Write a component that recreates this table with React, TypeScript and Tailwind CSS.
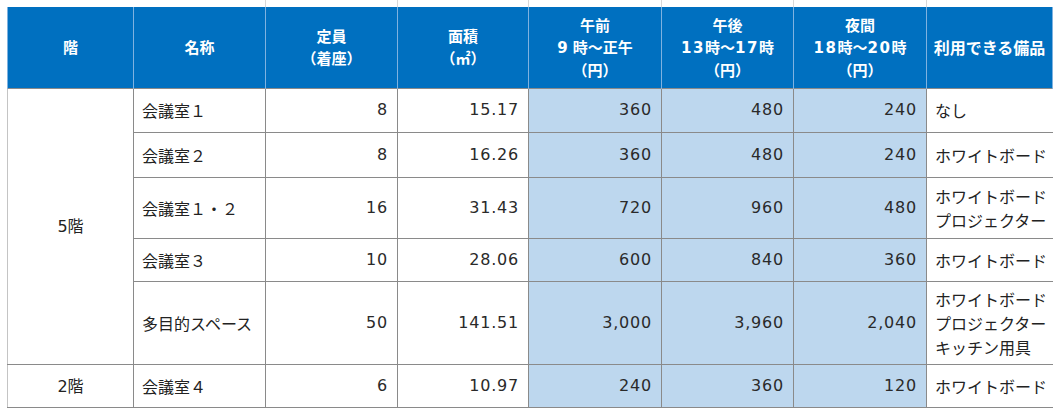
const rows = [
  { name: "会議室１", cap: "8", area: "15.17", am: "360", pm: "480", ev: "240", eq: ["なし"], h: "h-[44px]" },
  { name: "会議室２", cap: "8", area: "16.26", am: "360", pm: "480", ev: "240", eq: ["ホワイトボード"], h: "h-[45px]" },
  { name: "会議室１・２", cap: "16", area: "31.43", am: "720", pm: "960", ev: "480", eq: ["ホワイトボード", "プロジェクター"], h: "h-[61px]" },
  { name: "会議室３", cap: "10", area: "28.06", am: "600", pm: "840", ev: "360", eq: ["ホワイトボード"], h: "h-[43px]" },
  { name: "多目的スペース", cap: "50", area: "141.51", am: "3,000", pm: "3,960", ev: "2,040", eq: ["ホワイトボード", "プロジェクター", "キッチン用具"], h: "h-[83px]" },
];

const td = "border border-[#8a8a8a] px-[8px] py-0 align-middle";
const eqCell = "border border-[#8a8a8a] border-r-white pl-[8px] pr-0 py-0 align-middle whitespace-nowrap";
const num = `${td} text-right pr-[9px] text-[16px] text-[#2a2a2a] tracking-[0.8px] [font-family:'DejaVu_Sans',sans-serif]`;
const price = `${num} bg-[#bdd7ee]`;
const th = "border-x border-[#7fb2e0] bg-[#0070c0] px-1 text-center align-middle font-bold text-white leading-[22px]";
const dig = "[font-family:'DejaVu_Sans',sans-serif] tracking-[1.5px]";

export default function App() {
  return (
    <div className="h-[410px] w-[1057px] overflow-hidden bg-white pl-[7px] text-[16px] text-[#222] [font-family:'Noto_Sans_CJK_JP',sans-serif]">
      <table className="w-[1045px] table-fixed border-collapse">
        <colgroup>
          <col className="w-[126px]" />
          <col className="w-[132px]" />
          <col className="w-[132px]" />
          <col className="w-[131px]" />
          <col className="w-[133px]" />
          <col className="w-[132px]" />
          <col className="w-[133px]" />
          <col className="w-[126px]" />
        </colgroup>
        <thead>
          <tr className="h-[7px]">
            <td className="border-x border-white p-0" />
            {Array.from({ length: 7 }).map((_, i) => (
              <td key={i} className="border-l border-[#d8d8d8] p-0" />
            ))}
          </tr>
          <tr className="h-[81px] text-[15px]">
            <th className={th}>階</th>
            <th className={th}>名称</th>
            <th className={th}>定員<br />（着座）</th>
            <th className={th}>面積<br />（㎡）</th>
            <th className={th}>午前<br /><span className={dig}>9</span> 時～正午<br />（円）</th>
            <th className={th}>午後<br /><span className={dig}>13</span>時～<span className={dig}>17</span>時<br />（円）</th>
            <th className={th}>夜間<br /><span className={dig}>18</span>時～<span className={dig}>20</span>時<br />（円）</th>
            <th className={`${th} whitespace-nowrap text-[16px]`}>利用できる備品</th>
          </tr>
        </thead>
        <tbody className="leading-[24px]">
          {rows.map((r, i) => (
            <tr key={r.name} className={r.h}>
              {i === 0 && (
                <td rowSpan={5} className="border border-[#8a8a8a] border-l-[#c4c4c4] text-center align-middle">
                  <span className="[font-family:'DejaVu_Sans',sans-serif]">5</span>階
                </td>
              )}
              <td className={`${td} border-l-[#c4c4c4]`}>{r.name}</td>
              <td className={num}>{r.cap}</td>
              <td className={num}>{r.area}</td>
              <td className={price}>{r.am}</td>
              <td className={price}>{r.pm}</td>
              <td className={price}>{r.ev}</td>
              <td className={eqCell}>
                {r.eq.map((e) => (
                  <div key={e}>{e}</div>
                ))}
              </td>
            </tr>
          ))}
          <tr className="h-[43px]">
            <td className="border border-[#8a8a8a] border-l-[#c4c4c4] text-center align-middle">
              <span className="[font-family:'DejaVu_Sans',sans-serif]">2</span>階
            </td>
            <td className={`${td} border-l-[#c4c4c4]`}>会議室４</td>
            <td className={num}>6</td>
            <td className={num}>10.97</td>
            <td className={price}>240</td>
            <td className={price}>360</td>
            <td className={price}>120</td>
            <td className={eqCell}>ホワイトボード</td>
          </tr>
        </tbody>
      </table>
    </div>
  );
}
